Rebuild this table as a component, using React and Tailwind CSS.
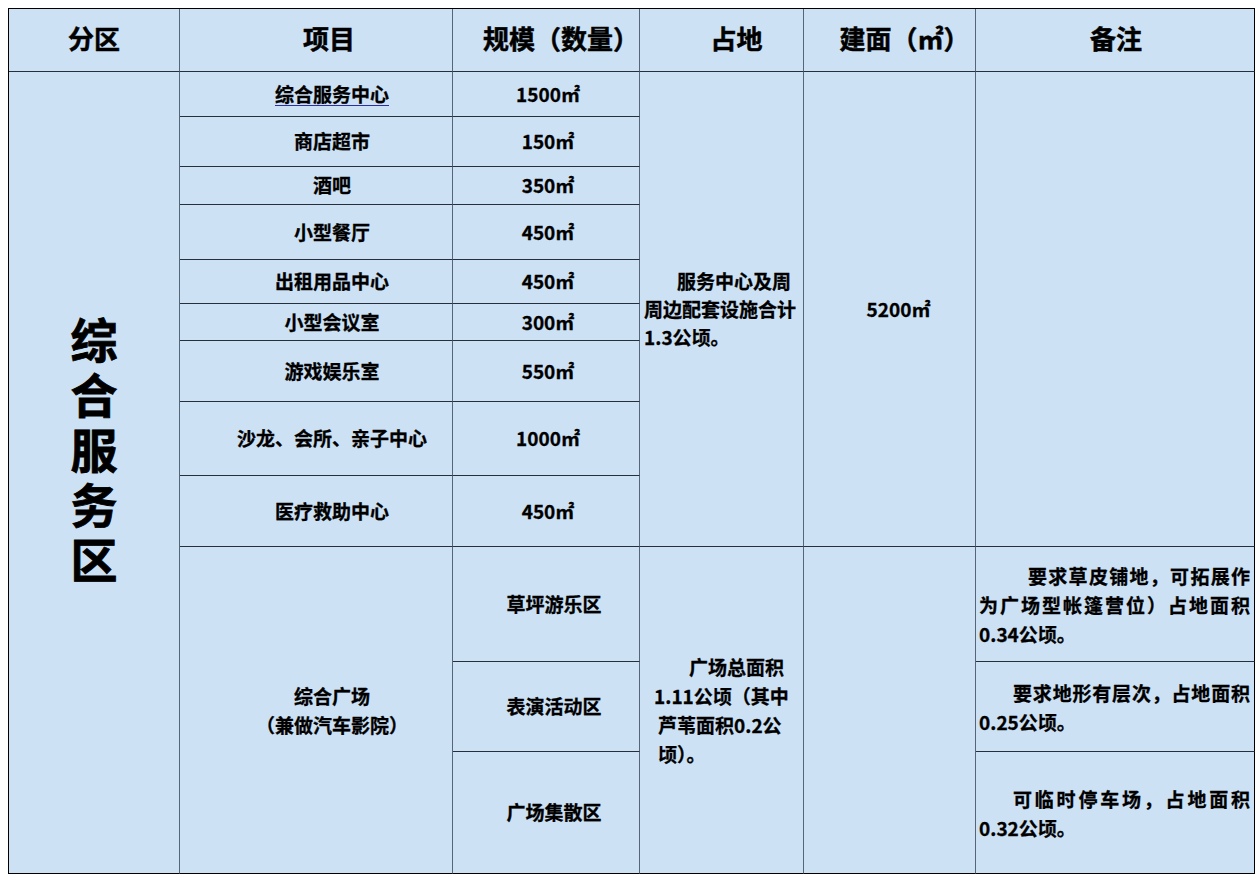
import React from "react";

const H = "border-b border-b-[#25303c]";
const V = "border-r border-r-[#55657a]";

function Cell({ className = "", children }) {
  return <div className={`${H} ${V} flex items-center ${className}`}>{children}</div>;
}

const items = [
  ["综合服务中心", "1500㎡"],
  ["商店超市", "150㎡"],
  ["酒吧", "350㎡"],
  ["小型餐厅", "450㎡"],
  ["出租用品中心", "450㎡"],
  ["小型会议室", "300㎡"],
  ["游戏娱乐室", "550㎡"],
  ["沙龙、会所、亲子中心", "1000㎡"],
  ["医疗救助中心", "450㎡"],
];

const rowStart = [
  "row-start-2",
  "row-start-3",
  "row-start-4",
  "row-start-5",
  "row-start-6",
  "row-start-7",
  "row-start-8",
  "row-start-9",
  "row-start-10",
];

function J({ children, className = "" }) {
  return (
    <div className={`text-justify [text-align-last:justify] whitespace-nowrap ${className}`}>{children}</div>
  );
}

const HD = "row-start-1 justify-center text-[26px] pb-[6px] [-webkit-text-stroke:0.5px_black]";

export default function App() {
  return (
    <div lang="zh-CN" className="w-[1260px] h-[880px] bg-white font-['Noto_Sans_CJK_SC',sans-serif] text-black font-bold [-webkit-text-stroke:0.3px_black]">
      <div className="pt-[8px] pl-[8px]">
        <div className="grid w-max border-l border-t border-black bg-[#cce1f4] grid-cols-[171px_273px_187px_164px_172px_279px] grid-rows-[63px_45px_50px_38px_55px_44px_37px_61px_74px_71px_115px_90px_122px]">
          {/* Header */}
          <Cell className={`${HD} col-start-1 pl-[0px]`}>分区</Cell>
          <Cell className={`${HD} col-start-2 pl-[26px]`}>项目</Cell>
          <Cell className={`${HD} col-start-3 pl-[30px]`}>规模（数量）</Cell>
          <Cell className={`${HD} col-start-4 pl-[30px]`}>占地</Cell>
          <Cell className={`${HD} col-start-5 pl-[30px]`}>建面（㎡）</Cell>
          <Cell className={`${HD} col-start-6 pl-[2px] border-r-black`}>备注</Cell>

          {/* Zone */}
          <Cell className="row-start-2 row-span-12 col-start-1 justify-center border-b-black pb-[50px]">
            <div className="w-[48px] break-all text-center text-[47px] leading-[55px] [-webkit-text-stroke:0.8px_black]">
              综合服务区
            </div>
          </Cell>

          {items.map(([name, size], i) => (
            <React.Fragment key={name}>
              <Cell className={`${rowStart[i]} col-start-2 justify-center text-[19px] pl-[32px]`}>
                {i === 0 ? (
                  <span className="underline decoration-[#2e2ea8] decoration-1 underline-offset-[3px]">{name}</span>
                ) : (
                  name
                )}
              </Cell>
              <Cell className={`${rowStart[i]} col-start-3 justify-center text-[19px] pl-[4px]`}>{size}</Cell>
            </React.Fragment>
          ))}

          <Cell className="row-start-2 row-span-9 col-start-4 text-[19px] leading-[28px] pl-[4px]">
            <div>
              <div className="pl-[33px]">服务中心及周</div>
              <div>周边配套设施合计</div>
              <div>1.3公顷。</div>
            </div>
          </Cell>
          <Cell className="row-start-2 row-span-9 col-start-5 justify-center text-[19px] pl-[18px]">5200㎡</Cell>
          <Cell className="row-start-2 row-span-9 col-start-6 border-r-black" />

          {/* Plaza */}
          <Cell className="row-start-11 row-span-3 col-start-2 justify-center text-[19px] leading-[29px] pl-[32px] border-b-black">
            <div className="text-center">
              <div>综合广场</div>
              <div>（兼做汽车影院）</div>
            </div>
          </Cell>
          <Cell className="row-start-11 col-start-3 justify-center text-[19px] pl-[16px]">草坪游乐区</Cell>
          <Cell className="row-start-12 col-start-3 justify-center text-[19px] pl-[16px]">表演活动区</Cell>
          <Cell className="row-start-13 col-start-3 justify-center text-[19px] pl-[16px] border-b-black">广场集散区</Cell>

          <Cell className="row-start-11 row-span-3 col-start-4 text-[19px] leading-[29px] pl-[18px] border-b-black">
            <div>
              <div className="pl-[31px]">广场总面积</div>
              <div className="ml-[-4px]">1.11公顷（其中</div>
              <div>芦苇面积0.2公</div>
              <div>顷）。</div>
            </div>
          </Cell>
          <Cell className="row-start-11 row-span-3 col-start-5 border-b-black" />

          <Cell className="row-start-11 col-start-6 text-[19px] leading-[29px] pl-[3px] pr-[4px] border-r-black">
            <div className="w-full">
              <J className="pl-[49px]">要求草皮铺地，可拓展作</J>
              <J>为广场型帐篷营位）占地面积</J>
              <div>0.34公顷。</div>
            </div>
          </Cell>
          <Cell className="row-start-12 col-start-6 text-[19px] leading-[29px] pl-[3px] pr-[4px] border-r-black">
            <div className="w-full">
              <J className="pl-[34px]">要求地形有层次，占地面积</J>
              <div>0.25公顷。</div>
            </div>
          </Cell>
          <Cell className="row-start-13 col-start-6 text-[19px] leading-[29px] pl-[3px] pr-[4px] border-r-black border-b-black">
            <div className="w-full">
              <J className="pl-[34px]">可临时停车场，占地面积</J>
              <div>0.32公顷。</div>
            </div>
          </Cell>
        </div>
      </div>
    </div>
  );
}
